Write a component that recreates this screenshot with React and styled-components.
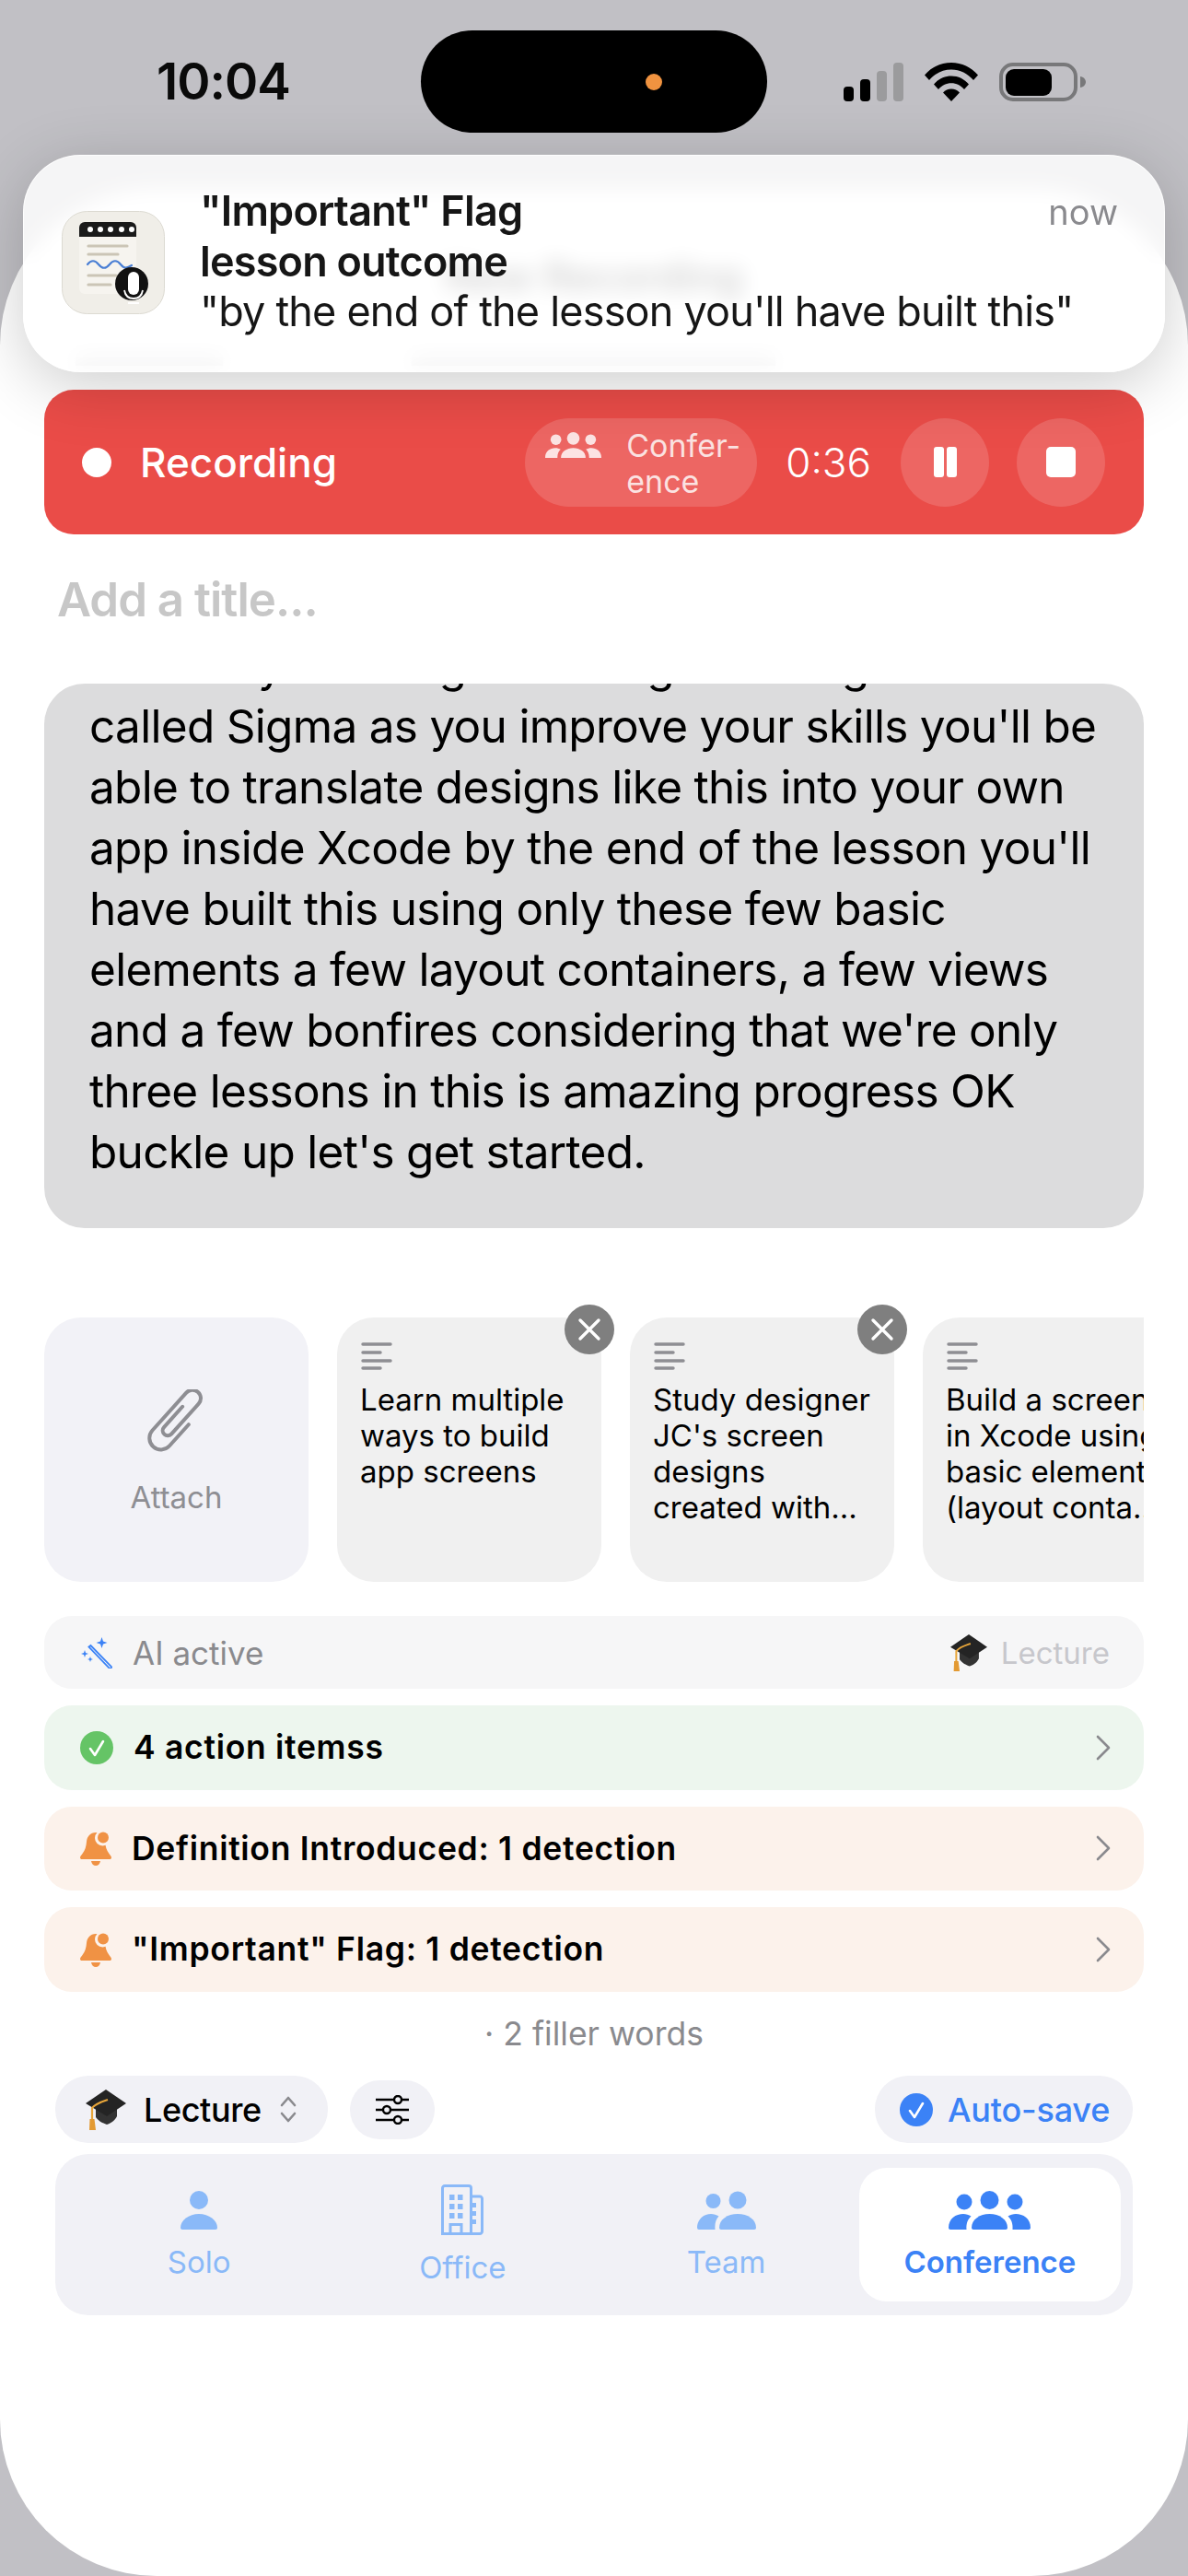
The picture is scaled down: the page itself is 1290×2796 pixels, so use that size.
import styled, { createGlobalStyle } from "styled-components";

const GlobalStyle = createGlobalStyle`
	html, body {
		margin: 0;
		padding: 0;
		background: #c1c0c5;
	}
	* {
		box-sizing: border-box;
	}
	body {
		font-family: Inter, "Noto Sans", sans-serif;
		color: #000;
	}
`;

const blue = "#3b82f6";
const lightBlue = "#8ab9f8";

function SignalIcon() {
	return (
		<svg width="65" height="42" viewBox="0 0 65 42">
			<rect x="0" y="26" width="11" height="16" rx="4" fill="#000" />
			<rect x="18" y="18" width="11" height="24" rx="4" fill="#000" />
			<rect x="36" y="9" width="11" height="33" rx="4" fill="#9b9b9d" />
			<rect x="54" y="0" width="11" height="42" rx="4" fill="#9b9b9d" />
		</svg>
	);
}

function WifiIcon() {
	return (
		<svg width="58" height="42" viewBox="0 0 58 42">
			<path d="M0 13.5C7.5 4.8 17.6 0 29 0s21.500 4.800 29 13.500l-5 5.500C46.800 11.800 38.400 7.500 29 7.500S11.200 11.800 5 19z" fill="#000" />
			<path d="M10 23.500C14.800 17.800 21.500 14.500 29 14.500s14.200 3.300 19 9l-5 5.500C39.400 24.800 34.500 22.300 29 22.300S18.600 24.800 15 29z" fill="#000" />
			<path d="M20 32.500c2.300-2.500 5.500-4 9-4s6.700 1.500 9 4L29 42z" fill="#000" />
		</svg>
	);
}

function BatteryIcon() {
	return (
		<svg width="94" height="42" viewBox="0 0 94 42">
			<rect x="2" y="2" width="81" height="38" rx="13" fill="none" stroke="#78787a" strokeWidth="4" />
			<rect x="7" y="7" width="50" height="29" rx="9" fill="#000" />
			<path d="M88 15c3.500 0.600 6 3 6 6s-2.500 5.400-6 6z" fill="#78787a" />
		</svg>
	);
}

function AppIcon() {
	return (
		<svg width="112" height="112" viewBox="0 0 112 112">
			<rect x="0.5" y="0.5" width="111" height="111" rx="27" fill="#f0eee8" stroke="#dcdad2" />
			<rect x="19" y="12" width="62" height="78" rx="6" fill="#f6f4ef" />
			<path d="M19 28V18a6 6 0 0 1 6-6h50a6 6 0 0 1 6 6v10z" fill="#1a1a1a" />
			{[31, 42, 53, 65, 76].map((cx) => (
				<circle key={cx} cx={cx} cy="20" r="3" fill="#fff" />
			))}
			<g stroke="#cbc5b6" strokeWidth="3.200" strokeLinecap="round">
				<path d="M29 38h42" />
				<path d="M29 47h32" />
				<path d="M29 70h30" />
				<path d="M29 80h24" />
			</g>
			<path d="M28 58c4-5 8-5 12 0s8 5 12 0 8-5 12 0 7 4 12 1" fill="none" stroke="#4a7fd4" strokeWidth="2.200" strokeLinecap="round" />
			<circle cx="76" cy="79" r="18" fill="#111" />
			<rect x="72" y="66" width="12" height="25" rx="6" fill="#fff" />
			<path d="M68 86c1 6 5 9 10 9s9-3 10-9" fill="none" stroke="#fff" strokeWidth="1.800" />
			<path d="M72 100h12" stroke="#fff" strokeWidth="2" />
		</svg>
	);
}

function ConferenceIcon({ size = 89, color = blue }) {
	return (
		<svg width={size} height={(size * 42) / 89} viewBox="0 0 89 42" fill={color}>
			<circle cx="17" cy="12" r="8.500" />
			<circle cx="44.500" cy="10" r="10" />
			<circle cx="72" cy="12" r="8.500" />
			<path d="M27 42a2 2 0 0 1-2-2C25 31 34 25 44.500 25S64 31 64 40a2 2 0 0 1-2 2z" />
			<path d="M0 40C0 30 8 25 16 25c3 0 6 1 8.500 2.500C20.500 31 19 36 19.500 42H2a2 2 0 0 1-2-2z" />
			<path d="M89 40C89 30 81 25 73 25c-3 0-6 1-8.500 2.500C68.500 31 70 36 69.500 42H87a2 2 0 0 0 2-2z" />
		</svg>
	);
}

function TeamIcon() {
	return (
		<svg width="64" height="42" viewBox="0 0 64 42" fill={lightBlue}>
			<circle cx="17.500" cy="11" r="8" />
			<circle cx="44" cy="10" r="9.500" />
			<path d="M26 42a2 2 0 0 1-2-2C24 31 33 25 44 25s20 6 20 15a2 2 0 0 1-2 2z" />
			<path d="M0 40C0 31 7 25 15 25c3 0 6 1 8.500 2.500C20 31 19 36 19.500 42H2a2 2 0 0 1-2-2z" />
		</svg>
	);
}

function SoloIcon() {
	return (
		<svg width="40" height="42" viewBox="0 0 40 42" fill={lightBlue}>
			<circle cx="20" cy="10" r="10" />
			<path d="M2 42a2 2 0 0 1-2-2C0 32 9 25 20 25s20 7 20 15a2 2 0 0 1-2 2z" />
		</svg>
	);
}

function OfficeIcon() {
	return (
		<svg width="46" height="55" viewBox="0 0 46 55" fill="none" stroke={lightBlue} strokeWidth="3">
			<path d="M1.500 53.500V4a2.500 2.500 0 0 1 2.500-2.500h26a2.500 2.500 0 0 1 2.500 2.500v49.500z" />
			<path d="M32.500 13H42a2.500 2.500 0 0 1 2.500 2.500V51a2.500 2.500 0 0 1-2.500 2.500H32.500" />
			<path d="M10 53.500V43.500h12v10" />
			<g fill={lightBlue} stroke="none">
				{[11, 21, 31].map((y) => (
					<g key={y}>
						<rect x="9" y={y} width="5.500" height="6" />
						<rect x="18" y={y} width="5.500" height="6" />
					</g>
				))}
				{[20, 29, 38].map((y) => (
					<rect key={y} x="33" y={y} width="5" height="5" />
				))}
			</g>
		</svg>
	);
}

function WandIcon() {
	return (
		<svg width="34" height="34" viewBox="0 0 34 34" fill={blue}>
			<path d="M8.500 10.500l2-1.500L33 32.200a1.500 1.500 0 0 1-2.200 1.600z" fill="none" stroke={blue} strokeWidth="1.800" />
			<path d="M22.500 0l1.500 4.500L28.500 6 24 7.500 22.500 12 21 7.500 16.500 6 21 4.500z" />
			<path d="M4 14l1 3 3 1-3 1-1 3-1-3-3-1 3-1z" />
			<path d="M10 21l.8 2.200 2.200.8-2.200.8L10 27l-.8-2.200L7 24l2.200-.8z" />
		</svg>
	);
}

function CheckCircle({ color }) {
	return (
		<svg width="36" height="36" viewBox="0 0 36 36">
			<circle cx="18" cy="18" r="18" fill={color} />
			<path d="M11 19l5 7 9-15" fill="none" stroke="#fff" strokeWidth="2.600" strokeLinecap="round" strokeLinejoin="round" />
		</svg>
	);
}

function BellIcon() {
	return (
		<svg width="34" height="38" viewBox="0 0 34 38">
			<path d="M17 2c-6 0-9.500 4.500-10 10-.4 5-1.500 9-4.500 13-1.200 1.600-2.500 3-2.500 4.200C0 30.500 1 31 2.500 31h29c1.500 0 2.500-.5 2.500-1.800 0-1.200-1.300-2.600-2.500-4.200-3-4-4-8-4.500-13C27 6.500 23 2 17 2z" fill="#f09244" />
			<path d="M12 33h10c-.5 3-2.500 5-5 5s-4.500-2-5-5z" fill="#f09244" />
			<circle cx="24.500" cy="8" r="8.500" fill="#fcf2eb" />
			<circle cx="25" cy="7.500" r="6" fill="#f09244" />
		</svg>
	);
}

function Chevron() {
	return (
		<svg width="16" height="28" viewBox="0 0 16 28" fill="none" stroke="#8a8a8e" strokeWidth="2.600" strokeLinecap="round" strokeLinejoin="round">
			<path d="M2 2l12 12L2 26" />
		</svg>
	);
}

function GradCap({ size = 44 }) {
	return (
		<svg width={size} height={size} viewBox="0 0 44 44">
			<path d="M11 21v9c4 5 7 6 12 8 6-2 9-5 11-9v-8z" fill="#333" />
			<path d="M22 0l22 15-21 14L0 15z" fill="#242424" />
			<path d="M24 11c-6 2-13 4-17 9v14" fill="none" stroke="#e8a63a" strokeWidth="2.200" />
			<path d="M4.500 32h5l1.500 12H4z" fill="#e39a33" />
		</svg>
	);
}

function SlidersIcon() {
	return (
		<svg width="36" height="32" viewBox="0 0 36 32" fill="none" stroke="#000" strokeWidth="2.400">
			<path d="M0 5h20M28 5h8" />
			<path d="M0 16h8M16 16h20" />
			<path d="M0 27h20M28 27h8" />
			<circle cx="24" cy="5" r="4" />
			<circle cx="12" cy="16" r="4" />
			<circle cx="24" cy="27" r="4" />
		</svg>
	);
}

function UpDownIcon() {
	return (
		<svg width="18" height="31" viewBox="0 0 18 31" fill="none" stroke="#8a8a8e" strokeWidth="2.600" strokeLinecap="round" strokeLinejoin="round">
			<path d="M2 11l7-8 7 8" />
			<path d="M2 20l7 8 7-8" />
		</svg>
	);
}

function PaperclipIcon() {
	return (
		<svg width="64" height="70" viewBox="0 0 64 70" fill="none" stroke="#8e8e93" strokeWidth="4" strokeLinecap="round">
			<g transform="translate(51 -6) rotate(42)">
				<path d="M25 37v31a12.500 12.500 0 0 1-25 0V13a9 9 0 0 1 18 0v44a5.500 5.500 0 0 1-11 0V27" />
			</g>
		</svg>
	);
}

function NotesIcon() {
	return (
		<svg width="34" height="30" viewBox="0 0 34 30" fill="none" stroke="#8e8e93" strokeWidth="3.400" strokeLinecap="round">
			<path d="M2 2h30" />
			<path d="M2 11h19" />
			<path d="M2 20h30" />
			<path d="M2 28h19" />
		</svg>
	);
}

function CloseIcon() {
	return (
		<svg width="26" height="26" viewBox="0 0 26 26" fill="none" stroke="#fff" strokeWidth="3.400" strokeLinecap="round">
			<path d="M3 3l20 20M23 3L3 23" />
		</svg>
	);
}

const cards = [
	{ id: 1, text: "Learn multiple\nways to build\napp screens" },
	{ id: 2, text: "Study designer\nJC's screen\ndesigns\ncreated with..." },
	{ id: 3, text: "Build a screen\nin Xcode using\nbasic elements\n(layout conta...", last: true },
];

export default function App() {
	return (
		<Screen>
			<GlobalStyle />
			<StatusBar>
				<Time>10:04</Time>
				<Island>
					<IslandDot />
				</Island>
				<StatusIcons>
					<SignalIcon />
					<WifiIcon />
					<BatteryIcon />
				</StatusIcons>
			</StatusBar>

			<Notification>
				<AppIcon />
				<NotificationText>
					<NotificationTitle>"Important" Flag</NotificationTitle>
					<NotificationTitle>lesson outcome</NotificationTitle>
					<NotificationBody>"by the end of the lesson you'll have built this"</NotificationBody>
				</NotificationText>
				<NotificationTime>now</NotificationTime>
			</Notification>

			<Sheet>
				<SheetHeader>
					<HeaderTitle>New Recording</HeaderTitle>
					<HeaderStrip>
						<HeaderBar $width={160} />
						<HeaderBar $width={395} />
					</HeaderStrip>
				</SheetHeader>

				<RecordingBar>
					<RecordDot />
					<RecordingLabel>Recording</RecordingLabel>
					<ModePill>
						<ConferenceIcon size={61} color="rgba(255,255,255,0.82)" />
						<ModeLabel>
							Confer-
							<br />
							ence
						</ModeLabel>
					</ModePill>
					<Timer>0:36</Timer>
					<RoundButton>
						<PauseBar />
						<PauseBar />
					</RoundButton>
					<RoundButton>
						<StopSquare />
					</RoundButton>
				</RecordingBar>

				<TitleField>Add a title...</TitleField>

				<Transcript>
					<TranscriptText>
						So now you're a great designer using a tool
						<br />
						called Sigma as you improve your skills you'll be able to translate designs like this into your own app inside Xcode by the end of the lesson you'll have built this using only these few basic elements a few layout containers, a few views and a few bonfires considering that we're only three lessons in this is amazing progress OK buckle up let's get started.
					</TranscriptText>
				</Transcript>

				<CardRow>
					<AttachCard>
						<PaperclipIcon />
						<AttachLabel>Attach</AttachLabel>
					</AttachCard>
					{cards.map((card) => (
						<NoteCard key={card.id}>
							{!card.last && (
								<CloseBadge>
									<CloseIcon />
								</CloseBadge>
							)}
							<NotesIcon />
							<NoteText>{card.text}</NoteText>
						</NoteCard>
					))}
				</CardRow>

				<AiRow>
					<WandIcon />
					<AiLabel>AI active</AiLabel>
					<AiMode>
						<GradCap size={40} />
						<AiModeLabel>Lecture</AiModeLabel>
					</AiMode>
				</AiRow>

				<InfoRow $tone="#edf6ee">
					<CheckCircle color="#65c466" />
					<InfoLabel>4 action itemss</InfoLabel>
					<Chevron />
				</InfoRow>
				<InfoRow $tone="#fcf2eb">
					<BellIcon />
					<InfoLabel>Definition Introduced: 1 detection</InfoLabel>
					<Chevron />
				</InfoRow>
				<InfoRow $tone="#fcf2eb">
					<BellIcon />
					<InfoLabel>"Important" Flag: 1 detection</InfoLabel>
					<Chevron />
				</InfoRow>

				<FillerNote>· 2 filler words</FillerNote>

				<Toolbar>
					<LecturePill>
						<GradCap />
						<PillLabel>Lecture</PillLabel>
						<UpDownIcon />
					</LecturePill>
					<SlidersPill>
						<SlidersIcon />
					</SlidersPill>
					<AutoSavePill>
						<CheckCircle color={blue} />
						<AutoSaveLabel>Auto-save</AutoSaveLabel>
					</AutoSavePill>
				</Toolbar>

				<Segments>
					<Segment>
						<SoloIcon />
						<SegmentLabel>Solo</SegmentLabel>
					</Segment>
					<Segment>
						<OfficeIcon />
						<SegmentLabel>Office</SegmentLabel>
					</Segment>
					<Segment>
						<TeamIcon />
						<SegmentLabel>Team</SegmentLabel>
					</Segment>
					<Segment $active>
						<ConferenceIcon />
						<SegmentLabel $active>Conference</SegmentLabel>
					</Segment>
				</Segments>
			</Sheet>
		</Screen>
	);
}

const Screen = styled.div`
	position: relative;
	width: 1290px;
	height: 2796px;
	overflow: hidden;
	background: #c1c0c5;
	display: flex;
	flex-direction: column;
`;

const StatusBar = styled.div`
	flex: none;
	height: 205px;
	padding: 33px 0 0 170px;
	display: flex;
	align-items: flex-start;
`;

const Time = styled.div`
	width: 143px;
	height: 111px;
	line-height: 111px;
	font-size: 55px;
	font-weight: 600;
	letter-spacing: -1px;
	color: #0a0a0a;
	white-space: nowrap;
`;

const Island = styled.div`
	width: 376px;
	height: 111px;
	margin-left: 144px;
	padding-right: 114px;
	border-radius: 56px;
	background: #000;
	display: flex;
	align-items: center;
	justify-content: flex-end;
`;

const IslandDot = styled.div`
	width: 18px;
	height: 18px;
	border-radius: 50%;
	background: #f09340;
`;

const StatusIcons = styled.div`
	height: 111px;
	margin-left: 83px;
	display: flex;
	align-items: center;
	gap: 23px;
`;

const Notification = styled.div`
	position: absolute;
	z-index: 5;
	top: 168px;
	left: 25px;
	width: 1240px;
	height: 236px;
	padding: 36px 50px 0 41px;
	border-radius: 62px;
	border: 1px solid rgba(255, 255, 255, 0.85);
	background: rgba(255, 255, 255, 0.84);
	backdrop-filter: blur(11px);
	box-shadow: 0 14px 70px rgba(0, 0, 0, 0.2);
	display: flex;
	align-items: flex-start;

	& > svg {
		flex: none;
		margin-top: 24px;
	}
`;

const NotificationText = styled.div`
	flex: 1;
	min-width: 0;
	margin-left: 38px;
	margin-top: -3px;
`;

const NotificationTitle = styled.div`
	font-size: 45px;
	line-height: 54.500px;
	font-weight: 600;
	letter-spacing: -0.8px;
	color: #161616;
	white-space: nowrap;
`;

const NotificationBody = styled.div`
	font-size: 45px;
	line-height: 54.500px;
	letter-spacing: -0.8px;
	color: #161616;
	white-space: nowrap;
`;

const NotificationTime = styled.div`
	flex: none;
	font-size: 38px;
	line-height: 50px;
	color: #8a8a8e;
`;

const Sheet = styled.div`
	flex: 1;
	padding: 0 48px;
	background: #fff;
	border-radius: 170px;
	display: flex;
	flex-direction: column;
`;

const SheetHeader = styled.div`
	flex: none;
	height: 218px;
	padding-top: 68px;
	text-align: center;
`;

const HeaderTitle = styled.div`
	font-size: 44px;
	line-height: 54px;
	font-weight: 600;
	color: #000;
`;

const HeaderStrip = styled.div`
	margin-top: 60px;
	padding-left: 34px;
	display: flex;
	gap: 205px;
`;

const HeaderBar = styled.div`
	width: ${(props) => props.$width}px;
	height: 10px;
	background: #b4b4b6;
`;

const RecordingBar = styled.div`
	flex: none;
	height: 157px;
	padding: 0 42px 0 41px;
	border-radius: 32px;
	background: #ea4c48;
	display: flex;
	align-items: center;
`;

const RecordDot = styled.div`
	width: 32px;
	height: 32px;
	border-radius: 50%;
	background: #fff;
`;

const RecordingLabel = styled.div`
	flex: 1;
	margin-left: 31px;
	font-size: 44px;
	font-weight: 500;
	color: #fff;
`;

const ModePill = styled.div`
	width: 252px;
	height: 96px;
	padding: 15px 0 0 22px;
	border-radius: 48px;
	background: rgba(255, 255, 255, 0.15);
	display: flex;
	align-items: flex-start;
	gap: 27px;
`;

const ModeLabel = styled.div`
	font-size: 34px;
	line-height: 39px;
	margin-top: -5px;
	color: rgba(255, 255, 255, 0.82);
`;

const Timer = styled.div`
	margin: 0 32px 0 31px;
	font-size: 44px;
	font-weight: 300;
	color: #fff;
`;

const RoundButton = styled.div`
	width: 96px;
	height: 96px;
	border-radius: 50%;
	background: rgba(255, 255, 255, 0.15);
	display: flex;
	align-items: center;
	justify-content: center;
	gap: 3px;

	& + & {
		margin-left: 30px;
	}
`;

const PauseBar = styled.div`
	width: 11px;
	height: 33px;
	border-radius: 3px;
	background: #fff;
`;

const StopSquare = styled.div`
	width: 32px;
	height: 33px;
	border-radius: 5px;
	background: #fff;
`;

const TitleField = styled.div`
	flex: none;
	height: 162px;
	padding: 38px 0 0 14px;
	font-size: 51px;
	line-height: 66px;
	font-weight: 600;
	letter-spacing: -1px;
	color: #c7c7c7;
`;

const Transcript = styled.div`
	flex: none;
	height: 591px;
	padding: 0 50px 50px 49px;
	border-radius: 44px;
	background: #dcdcdd;
	overflow: hidden;
	display: flex;
	flex-direction: column;
	justify-content: flex-end;
`;

const TranscriptText = styled.div`
	font-size: 49.500px;
	line-height: 66px;
	letter-spacing: -0.7px;
	color: #000;
`;

const CardRow = styled.div`
	flex: none;
	display: flex;
	gap: 31px;
	margin-top: 83px;
	padding-top: 14px;
	overflow: hidden;
`;

const AttachCard = styled.div`
	flex: none;
	width: 287px;
	height: 287px;
	padding-top: 78px;
	border-radius: 40px;
	background: #f2f2f7;
	display: flex;
	flex-direction: column;
	align-items: center;
`;

const AttachLabel = styled.div`
	margin-top: 27px;
	font-size: 33px;
	line-height: 40px;
	color: #8e8e93;
`;

const NoteCard = styled.div`
	position: relative;
	flex: none;
	width: 287px;
	height: 287px;
	padding: 27px 14px 0 25px;
	border-radius: 40px;
	background: #f0f0f0;

	& > svg {
		margin-left: 1px;
	}
`;

const CloseBadge = styled.div`
	position: absolute;
	top: -14px;
	right: -14px;
	width: 54px;
	height: 54px;
	border-radius: 50%;
	background: #7f7f7f;
	display: flex;
	align-items: center;
	justify-content: center;
`;

const NoteText = styled.div`
	margin-top: 9px;
	font-size: 33px;
	line-height: 39px;
	color: #000;
	white-space: pre;
`;

const AiRow = styled.div`
	flex: none;
	height: 79px;
	margin-top: 37px;
	padding: 0 37px 0 40px;
	border-radius: 30px;
	background: #f6f6f7;
	display: flex;
	align-items: center;
`;

const AiLabel = styled.div`
	flex: 1;
	margin-left: 22px;
	font-size: 35px;
	color: #8a8a8e;
`;

const AiMode = styled.div`
	display: flex;
	align-items: center;
	gap: 15px;
`;

const AiModeLabel = styled.div`
	font-size: 33px;
	color: #c7c7cc;
`;

const InfoRow = styled.div`
	flex: none;
	height: 91.500px;
	margin-top: 18px;
	padding: 0 36px 0 39px;
	border-radius: 30px;
	background: ${(props) => props.$tone};
	display: flex;
	align-items: center;
`;

const InfoLabel = styled.div`
	flex: 1;
	margin-left: 22px;
	font-size: 35.500px;
	font-weight: 600;
	letter-spacing: 0.7px;
	color: #000;
`;

const FillerNote = styled.div`
	flex: none;
	margin-top: 26.500px;
	height: 40px;
	line-height: 40px;
	text-align: center;
	font-size: 35.500px;
	color: #8a8a8e;
`;

const Toolbar = styled.div`
	flex: none;
	height: 73px;
	margin-top: 25px;
	padding: 0 12px;
	display: flex;
	align-items: center;
`;

const LecturePill = styled.div`
	width: 296px;
	height: 73px;
	padding-left: 33px;
	border-radius: 36px;
	background: #f1f1f6;
	display: flex;
	align-items: center;
	gap: 19px;
`;

const PillLabel = styled.div`
	font-size: 36px;
	font-weight: 500;
	letter-spacing: -0.4px;
	color: #000;
	margin-right: 1px;
`;

const SlidersPill = styled.div`
	width: 92px;
	height: 64px;
	margin-left: 24px;
	border-radius: 32px;
	background: #f1f1f6;
	display: flex;
	align-items: center;
	justify-content: center;
`;

const AutoSavePill = styled.div`
	margin-left: auto;
	width: 280px;
	height: 73px;
	padding-left: 27px;
	border-radius: 36px;
	background: #f1f1f6;
	display: flex;
	align-items: center;
	gap: 16px;
`;

const AutoSaveLabel = styled.div`
	font-size: 36px;
	font-weight: 500;
	letter-spacing: -0.2px;
	color: ${blue};
`;

const Segments = styled.div`
	flex: none;
	height: 175px;
	margin: 12px 12px 0;
	padding: 15px 13px 15px 14px;
	border-radius: 36px;
	background: #f1f1f6;
	display: grid;
	grid-template-columns: repeat(4, 1fr);
	gap: 2px;
`;

const Segment = styled.div`
	padding-top: 2px;
	border-radius: 30px;
	background: ${(props) => (props.$active ? "#fff" : "transparent")};
	display: flex;
	flex-direction: column;
	align-items: center;
	justify-content: center;
	gap: 15px;
`;

const SegmentLabel = styled.div`
	font-size: 33px;
	line-height: 41px;
	font-weight: ${(props) => (props.$active ? 600 : 400)};
	color: ${(props) => (props.$active ? blue : lightBlue)};
`;
